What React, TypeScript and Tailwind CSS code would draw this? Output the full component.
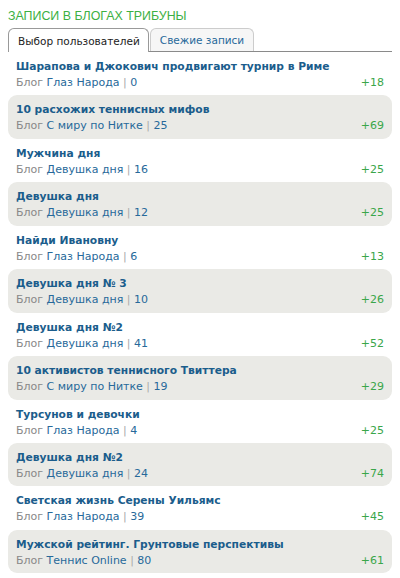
import React from 'react';

interface Post {
  title: string;
  blog: string;
  comments: number;
  score: number;
}

const posts: Post[] = [
  { title: 'Шарапова и Джокович продвигают турнир в Риме', blog: 'Глаз Народа', comments: 0, score: 18 },
  { title: '10 расхожих теннисных мифов', blog: 'С миру по Нитке', comments: 25, score: 69 },
  { title: 'Мужчина дня', blog: 'Девушка дня', comments: 16, score: 25 },
  { title: 'Девушка дня', blog: 'Девушка дня', comments: 12, score: 25 },
  { title: 'Найди Ивановну', blog: 'Глаз Народа', comments: 6, score: 13 },
  { title: 'Девушка дня № 3', blog: 'Девушка дня', comments: 10, score: 26 },
  { title: 'Девушка дня №2', blog: 'Девушка дня', comments: 41, score: 52 },
  { title: '10 активистов теннисного Твиттера', blog: 'С миру по Нитке', comments: 19, score: 29 },
  { title: 'Турсунов и девочки', blog: 'Глаз Народа', comments: 4, score: 25 },
  { title: 'Девушка дня №2', blog: 'Девушка дня', comments: 24, score: 74 },
  { title: 'Светская жизнь Серены Уильямс', blog: 'Глаз Народа', comments: 39, score: 45 },
  { title: 'Мужской рейтинг. Грунтовые перспективы', blog: 'Теннис Online', comments: 80, score: 61 },
];

const PostRow: React.FC<{ post: Post; shaded: boolean }> = ({ post, shaded }) => (
  <div className={`h-[43.45px] px-2 pt-[7px] rounded-[9px] ${shaded ? 'bg-[#eaeae6]' : ''}`}>
    <div className="text-[10.7px] leading-[16px] font-bold text-[#1b5d8c] whitespace-nowrap">{post.title}</div>
    <div className="flex items-center justify-between text-[11px] leading-[15px]">
      <div className="whitespace-nowrap">
        <span className="text-[#888]">Блог </span>
        <span className="text-[#27699a]">{post.blog}</span>
        <span className="text-[#aaa]"> | </span>
        <span className="text-[#27699a]">{post.comments}</span>
      </div>
      <span className="text-[#3aa64a]">+{post.score}</span>
    </div>
  </div>
);

export default function App() {
  return (
    <div className="w-[400px] h-[578px] bg-white font-['DejaVu_Sans',Verdana,sans-serif] px-2 overflow-hidden">
      <h2 className="pt-[8px] h-[27px] text-[12.4px] leading-[16px] text-[#3cb043] font-['Liberation_Sans',Arial,sans-serif] uppercase">
        Записи в блогах Трибуны
      </h2>
      <div className="flex items-end border-b border-[#8a8a8a] h-[25px]">
        <div className="h-[24px] mb-[-1px] pl-[9px] pr-[8px] pt-[4px] bg-white border border-b-0 border-[#999] rounded-t-[6px] text-[10.5px] leading-[16px] text-[#222]">
          Выбор пользователей
        </div>
        <div className="h-[23px] ml-[1px] px-[9px] pt-[3px] bg-[#f6f6f6] border border-b-0 border-[#ccc] rounded-t-[6px] text-[10.5px] leading-[16px] text-[#27699a]">
          Свежие записи
        </div>
      </div>
      <div>
        {posts.map((p, i) => (
          <PostRow key={i} post={p} shaded={i % 2 === 1} />
        ))}
      </div>
    </div>
  );
}
